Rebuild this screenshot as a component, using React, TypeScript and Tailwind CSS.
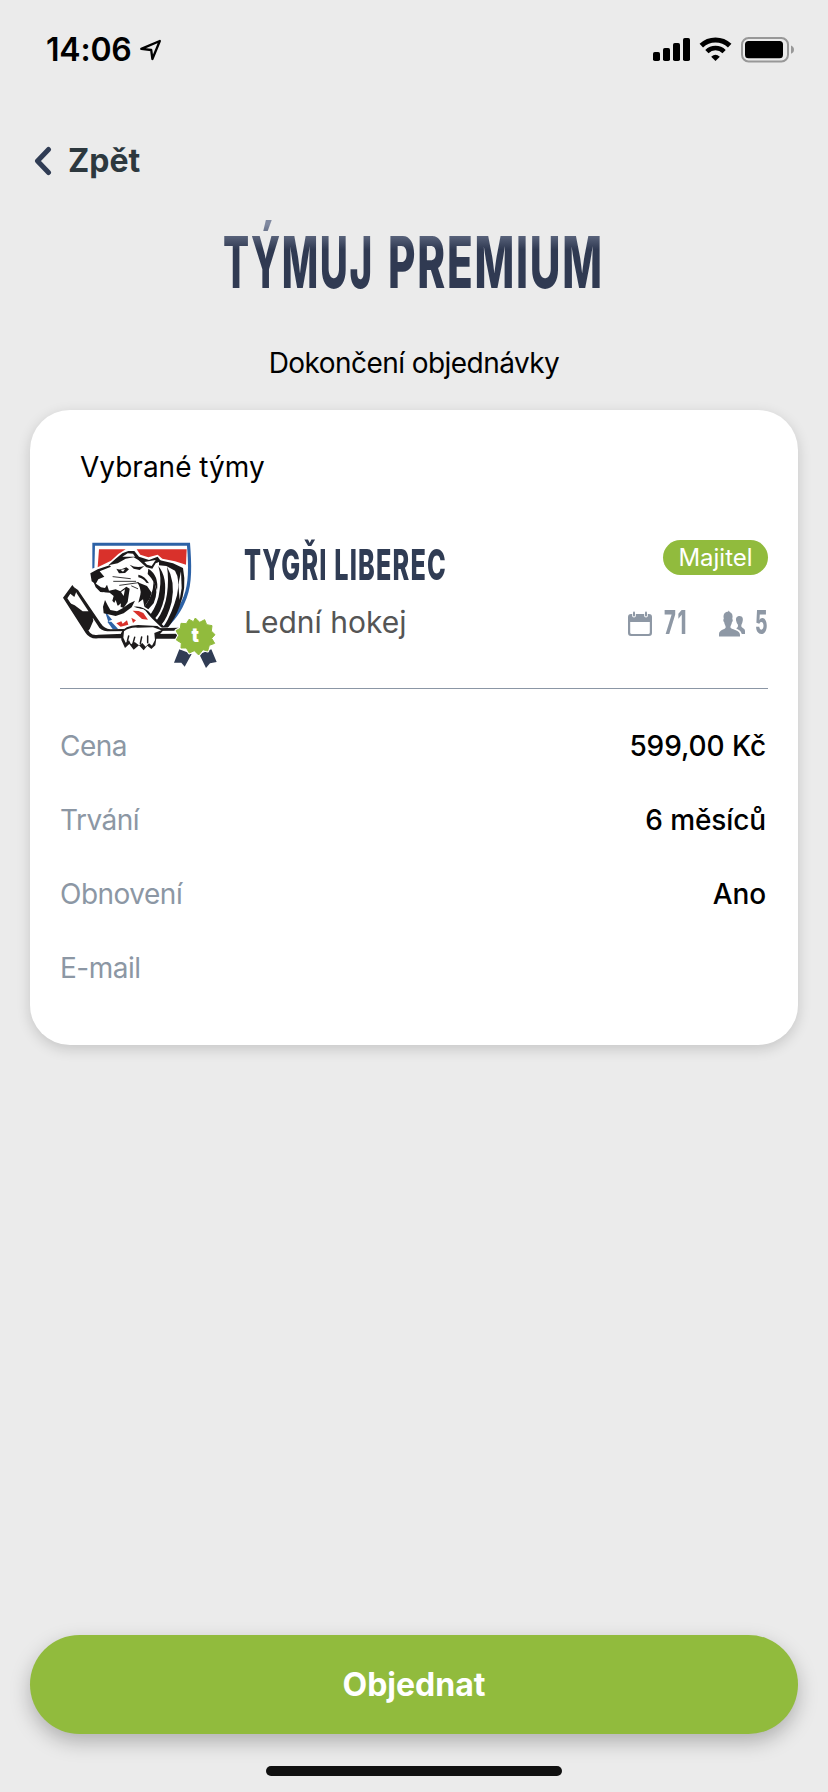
import type { ReactNode } from "react";

function StatusBar() {
  return (
    <div className="flex h-[99px] items-center justify-between pl-[46px] pr-[33px]">
      <div className="flex items-center">
        <span className="text-[32px] font-semibold tracking-[-0.2px]">14:06</span>
        <svg className="ml-[7px] h-[24px] w-[24px]" viewBox="0 0 24 24" fill="none">
          <path d="M2.3 10.9 L20.8 3 L13.4 21 L12.2 12 Z" stroke="#000" strokeWidth="2.3" strokeLinejoin="round" />
        </svg>
      </div>
      <svg className="h-[26px] w-[142px]" viewBox="0 0 142 26">
        <rect x="0" y="15" width="7" height="9" rx="1.8" />
        <rect x="10" y="11" width="7" height="13" rx="1.8" />
        <rect x="20" y="6" width="7" height="18" rx="1.8" />
        <rect x="30" y="1" width="7" height="23" rx="1.8" />
        <path d="M48.3 8.6 A20.5 20.5 0 0 1 76.7 8.6" fill="none" stroke="#000" strokeWidth="5" />
        <path d="M53.9 14.6 A12.2 12.2 0 0 1 71.1 14.6" fill="none" stroke="#000" strokeWidth="4.6" />
        <path d="M58.2 19.8 Q62.5 15.6 66.8 19.8 L62.5 24 Z" />
        <rect x="89" y="1" width="46" height="23.4" rx="6.6" fill="none" stroke="#989898" strokeWidth="2" />
        <rect x="92" y="4" width="38" height="17.2" rx="3.5" />
        <path d="M138 8.5 Q141 9.8 141 12.7 Q141 15.5 138 16.8 Z" fill="#989898" />
      </svg>
    </div>
  );
}

function TeamLogo() {
  return (
    <svg className="h-[164px] w-[170px] shrink-0" viewBox="30 42 510 492">
      <g transform="translate(105 84)">
        <path d="M22 14 H315 C320 80 322 135 305 180 C290 220 268 250 240 275 L100 282 L70 252 L22 100 Z" fill="#2d62a6" />
        <path d="M30 23 H306 C311 90 311 135 296 175 C280 216 255 245 226 275 L110 280 L60 220 L28 100 Z" fill="#fff" />
        <path d="M20 92 L60 80 L60 200 L40 230 L10 160 Z" fill="#fff" />
        <path d="M42 34 H122 L100 48 L78 68 L38 88 Z" fill="#d9312b" />
        <path d="M155 34 H305 L303 80 L270 70 L232 62 L218 50 L190 58 L166 50 Z" fill="#d9312b" />
        <g fill="#1a1819">
          <path d="M70 82 L92 62 L112 46 L130 39 L148 39 L162 56 L192 66 L218 56 L228 70 L212 76 L202 92 L184 88 L160 66 L146 58 L122 62 L98 76 Z" />
          <path d="M16 106 L38 94 L74 82 L78 86 L44 100 L58 116 L40 124 L32 138 L20 130 Z" />
          <path d="M24 128 L34 138 L48 148 L60 150 L66 140 L72 158 L92 154 L106 160 L124 146 L134 152 L128 192 L116 210 L94 202 L82 188 L86 174 L74 164 L46 162 L32 148 Z" />
          <path d="M54 206 L60 186 L68 202 L76 216 L96 220 L114 210 L134 196 L150 188 L140 208 L116 226 L92 234 L56 226 Z" />
          <path d="M94 92 Q106 98 124 88 L132 94 L120 105 L102 106 Z" />
          <path d="M134 80 Q154 92 178 84 L164 96 L146 92 Z" />
          <path d="M160 110 Q180 114 192 136 L184 134 Q176 122 160 118 Z" />
          <path d="M156 132 L186 144 L200 164 L194 182 L178 206 L174 184 L160 194 L166 170 Q170 152 156 132 Z" />
          <path d="M190 92 Q222 112 216 158 Q208 128 188 108 Z" />
          <path d="M206 130 Q222 160 206 196 L190 214 L178 206 Q204 176 206 130 Z" />
          <path d="M220 84 Q248 118 238 180 Q228 224 208 244 L196 230 Q220 196 224 156 Q230 118 220 84 Z" />
          <path d="M246 86 Q272 130 260 192 Q248 240 228 262 L214 248 Q240 214 246 168 Q252 124 246 86 Z" />
          <path d="M222 66 L264 76 L294 90 Q306 150 284 204 Q270 244 246 272 L234 270 Q262 226 276 172 Q286 124 270 98 L244 84 L222 82 Z" />
          <path d="M146 206 Q176 202 198 228 L240 268 L252 272 L222 274 L198 244 L182 218 Z" />
        </g>
        <g fill="#fff">
          <path d="M112 56 L128 46 L144 47 L150 56 L128 56 Z" />
          <path d="M178 72 L212 66 L200 84 L186 80 Z" />
          <path d="M288 100 L290 150 L284 186 L280 140 Z" />
          <path d="M106 95 L120 94 L114 101 Z" />
          <path d="M54 162 L62 166 L60 176 Z M108 162 L120 154 L116 174 Z M86 198 L92 186 L98 204 L108 196 L106 212 L90 212 Z" />
        </g>
        <path d="M84 116 L136 122 M86 130 L152 130 M104 142 L160 134 M140 144 L158 152" fill="none" stroke="#1a1819" strokeWidth="2.6" strokeLinecap="round" />
      </g>
      <path d="M176 333 L233 313 L255 293 L281 298 L307 326 L336 354 L199 367 Z" fill="#fff" />
      <path d="M199 340 L214 334 L218 341 L231 331 L235 344 L212 350 Z M248 302 L266 303 L280 309 L294 329 L276 327 Z M244 323 L258 331 L249 339 Z" fill="#d9312b" />
      <path d="M172 335 L184 335 L204 356 L190 360 Z" fill="#2d62a6" />
      <path d="M37 262 L68 222 L91 248 L154 342 Q163 356 184 358 L220 356 L376 352 L389 355 V386 H307 L299 406 L282 411 L249 411 L223 388 H139 Q122 388 111 369 Z" fill="#fff" />
      <path d="M39 263 L67 225 L80 242 L73 261 L61 251 L52 265 L120 368 Q128 377 145 374 L221 371 V385 H145 Q119 388 107 369 Z" fill="#1d1b1c" />
      <path d="M72 232 L84 240 L152 340 Q163 357 181 358 L386 353 V362 L172 364 Q151 363 143 346 L80 250 Z M52 276 L74 286 L98 304 L124 304 L130 332 L119 358 L108 366 Z" fill="#1d1b1c" />
      <path d="M309 372 L389 371 V386 H306 Z" fill="#1d1b1c" />
      <path d="M213 370 Q222 346 264 345 L322 348 L340 361 L319 385 L316 406 L304 417 L292 407 L281 421 L267 406 L251 419 L238 402 L225 414 L214 390 Z" fill="#1d1b1c" />
      <path d="M222 364 Q240 351 263 353 L309 352 L334 361 L313 369 L315 390 L306 407 L297 400 L287 410 L277 399 L267 406 L254 396 L243 403 L237 391 L227 398 L220 383 Z" fill="#fff" />
      <path d="M236 378 L232 394 M254 382 L249 400 M275 381 L271 400 M293 378 L293 398" fill="none" stroke="#1d1b1c" strokeWidth="4.5" strokeLinecap="round" />
      <path d="M388 418 L425 432 L404 470 L394 458 L372 458 Z M448 433 L484 418 L500 456 L480 460 L468 474 Z" fill="#303c54" />
      <path d="M436 324 L449 337 L464 329 L470 344 L486 347 L484 363 L495 374 L485 385 L494 400 L478 406 L473 423 L459 419 L446 435 L433 422 L418 429 L409 414 L393 414 L394 399 L379 390 L386 376 L378 362 L391 355 L393 340 L409 341 L417 328 L430 335 Z" fill="#91bb3d" stroke="#fff" strokeWidth="9" strokeLinejoin="round" />
      <path d="M436 324 L449 337 L464 329 L470 344 L486 347 L484 363 L495 374 L485 385 L494 400 L478 406 L473 423 L459 419 L446 435 L433 422 L418 429 L409 414 L393 414 L394 399 L379 390 L386 376 L378 362 L391 355 L393 340 L409 341 L417 328 L430 335 Z" fill="#91bb3d" stroke="#91bb3d" strokeWidth="3" strokeLinejoin="round" />
      <text x="436" y="397" textAnchor="middle" fill="#fff" fontFamily="Inter, sans-serif" fontSize="56" fontWeight="900">t</text>
    </svg>
  );
}

function CalendarIcon() {
  return (
    <svg className="h-[25px] w-[24px]" viewBox="0 0 24 25">
      <path fillRule="evenodd" fill="#8e98a5" d="M3 3 H4.2 V5 Q4.2 6.4 6 6.4 Q7.8 6.4 7.8 5 V3 H16.2 V5 Q16.2 6.4 18 6.4 Q19.8 6.4 19.8 5 V3 H21 Q24 3 24 6 V22 Q24 25 21 25 H3 Q0 25 0 22 V6 Q0 3 3 3 Z M2.2 11 V21.5 Q2.2 23 3.8 23 H20.2 Q21.8 23 21.8 21.5 V11 Z" />
      <rect x="5" y="0.5" width="2" height="5" rx="1" fill="#8e98a5" />
      <rect x="17" y="0.5" width="2" height="5" rx="1" fill="#8e98a5" />
    </svg>
  );
}

function PeopleIcon() {
  return (
    <svg className="h-[27px] w-[27px]" viewBox="0 0 27 27" fill="#8e98a5">
      <path d="M17.5 12 C16 8 18 6 20.5 6 C23.8 6 24.5 9 23.4 12.3 C23.2 13.8 22.2 14.2 22.3 16.3 C22.4 18 26 18.2 26 21 V24 H22.8 C22 20.7 19 19.5 17.2 18.3 C19.3 17.5 19.2 15.5 18.7 14.2 C18 13.8 17.8 13 17.5 12 Z" />
      <path d="M0 26.5 V24 C0 19.5 6.7 19.5 6.7 17.2 C6.7 15.2 5.4 14.6 5.2 12.2 C4.2 11.7 4 9.4 4.8 8.8 C3.8 4 6 1.8 9 1.8 L9.8 0.5 L10.7 1.9 C13.3 2.6 14.1 5.3 13.3 8.9 C14.1 9.4 13.9 11.6 12.9 12.2 C12.7 14.6 11.4 15.2 11.4 17.2 C11.4 19.5 21 19.4 21 24.7 V26.5 Z" />
    </svg>
  );
}

function Row({ label, children }: { label: string; children?: ReactNode }) {
  return (
    <div className="flex h-[74px] items-center justify-between pr-[2px]">
      <span className="text-[28px] tracking-[-0.5px] text-[#8c97a4]">{label}</span>
      <span className="text-[28px] font-medium tracking-[-0.1px]">{children}</span>
    </div>
  );
}

export default function App() {
  return (
    <div className="flex h-[1792px] w-[828px] flex-col bg-[#ebebeb] font-['Inter',sans-serif] text-black">
      <StatusBar />
      <div className="flex h-[124px] items-center pl-[33px]">
        <svg className="h-[30px] w-[20px]" viewBox="0 0 20 30" fill="none">
          <path d="M15.5 3.5 L4.5 15 L15.5 26.5" stroke="#303c54" strokeWidth="5" strokeLinecap="round" strokeLinejoin="round" />
        </svg>
        <span className="ml-[15px] text-[32px] font-bold text-[#2d383e]">Zpět</span>
      </div>
      <h1 className="flex h-[78px] items-center pl-[223px] text-[71.5px] font-extrabold leading-[90px]">
        <span className="w-[165px] whitespace-nowrap">
          <span className="inline-block origin-left scale-x-[0.541] bg-linear-to-b from-[#8089a0] from-[8%] to-[#303a52] to-[36%] bg-clip-text tracking-[3px] text-transparent">TÝMUJ</span>
        </span>{" "}
        <span className="w-[212px] whitespace-nowrap">
          <span className="inline-block origin-left scale-x-[0.59] bg-linear-to-b from-[#8089a0] from-[8%] to-[#303a52] to-[36%] bg-clip-text tracking-[3px] text-transparent">PREMIUM</span>
        </span>
      </h1>
      <div className="flex h-[109px] items-center justify-center pt-[15px] text-[28px] tracking-[-0.55px]">Dokončení objednávky</div>

      <section className="mx-[30px] h-[635px] rounded-[40px] bg-white px-[30px] shadow-[0_4px_14px_rgba(0,0,0,0.16)]">
        <div className="flex h-[114px] items-center pl-[20px] text-[28px]">Vybrané týmy</div>
        <div className="flex h-[165px] border-b border-[#8b96a5]">
          <TeamLogo />
          <div className="ml-[14px] flex-1 pt-[20px]">
            <div className="flex h-[40px] items-center">
              <span className="w-0 origin-left scale-x-[0.586] whitespace-nowrap text-[43px] font-extrabold leading-[40px] tracking-[2px] text-[#303c54]">TYGŘI LIBEREC</span>
            </div>
            <div className="flex h-[76px] items-center text-[30px] text-[#555]">Lední hokej</div>
          </div>
          <div className="flex flex-col items-end pt-[16px]">
            <div className="flex h-[35px] w-[105px] items-center justify-center rounded-full bg-[#91bb3d] text-[24px] text-white">Majitel</div>
            <div className="mt-[28px] flex h-[40px] items-center text-[32px] font-extrabold text-[#8e98a5]">
              <CalendarIcon />
              <span className="ml-[12px] w-[55px] origin-left scale-x-[0.63] tracking-[2.5px]">71</span>
              <PeopleIcon />
              <span className="ml-[9px] w-[13px] origin-left scale-x-[0.6]">5</span>
            </div>
          </div>
        </div>
        <div className="pt-[20px]">
          <Row label="Cena">599,00 Kč</Row>
          <Row label="Trvání">6 měsíců</Row>
          <Row label="Obnovení">Ano</Row>
          <Row label="E-mail" />
        </div>
      </section>

      <div className="mt-auto flex flex-col items-center pb-[16px]">
        <button className="h-[99px] w-[768px] rounded-full bg-[#91bb3d] text-[32px] font-bold text-white shadow-[0_8px_20px_rgba(0,0,0,0.25)]">Objednat</button>
        <div className="mt-[32px] h-[10px] w-[296px] rounded-full bg-[#101010]" />
      </div>
    </div>
  );
}
